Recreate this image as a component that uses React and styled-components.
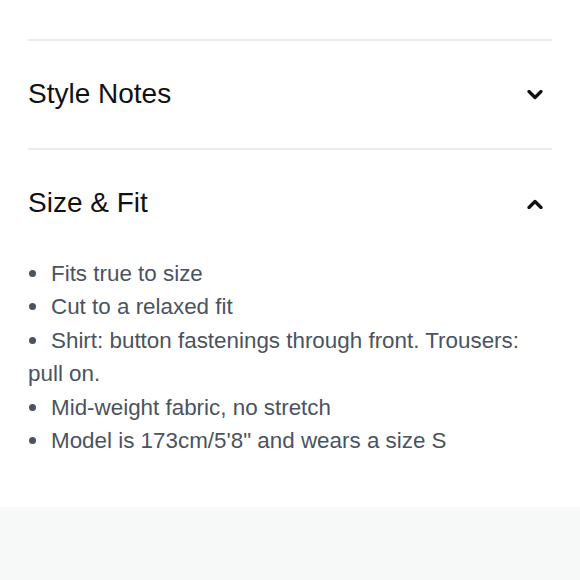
import React from "react";
import styled, { createGlobalStyle } from "styled-components";

// ========== GLOBAL ===========
const GlobalStyle = createGlobalStyle`
  html, body {
    margin: 0;
    padding: 0;
    background: #ffffff;
    font-family: "Liberation Sans", Arial, sans-serif;
  }
`;

// ========== STYLED COMPONENTS ===========
const Page = styled.div`
  width: 580px;
  min-height: 580px;
  display: flex;
  flex-direction: column;
`;

const Details = styled.section`
  padding: 39px 28px 50px;
  background: #ffffff;
`;

const Panel = styled.div`
  border-top: 2px solid #ebebeb;
`;

const PanelHeader = styled.button`
  width: 100%;
  height: 107px;
  display: flex;
  align-items: center;
  justify-content: space-between;
  padding: 0 9px 0 0;
  border: none;
  background: none;
  cursor: pointer;
  font-family: inherit;
  color: #111111;
`;

const PanelTitle = styled.span`
  font-size: 28px;
  font-weight: 400;
  letter-spacing: 0;
  margin-top: -2px;
`;

const List = styled.ul`
  margin: 0;
  padding: 0 20px 0 0;
  list-style: none;
  color: #4b5360;
  font-size: 22.4px;
  line-height: 33.4px;
`;

const Item = styled.li`
  &::before {
    content: "";
    display: inline-block;
    width: 7px;
    height: 7px;
    border-radius: 50%;
    background: #4b5360;
    margin: 0 15px 0 1px;
    vertical-align: 4px;
  }
`;

const Footer = styled.div`
  flex: 1;
  background: #f7f8f8;
`;

// ========== ICONS ===========
const Chevron = ({ up }) => (
  <svg width="16" height="10" viewBox="0 0 16 10" fill="none">
    <path
      d={up ? "M2 8.5 L8 2.5 L14 8.5" : "M2 1.5 L8 7.5 L14 1.5"}
      stroke="#111"
      strokeWidth="3.2"
      strokeLinecap="round"
      strokeLinejoin="round"
    />
  </svg>
);

// ========== DATA ===========
const fitNotes = [
  "Fits true to size",
  "Cut to a relaxed fit",
  "Shirt: button fastenings through front. Trousers: pull on.",
  "Mid-weight fabric, no stretch",
  "Model is 173cm/5'8\" and wears a size S",
];

// ========== COMPONENT ===========
const App = () => {
  return (
    <>
      <GlobalStyle />
      <Page>
        <Details>
          <Panel>
            <PanelHeader>
              <PanelTitle>Style Notes</PanelTitle>
              <Chevron />
            </PanelHeader>
          </Panel>
          <Panel>
            <PanelHeader>
              <PanelTitle>Size &amp; Fit</PanelTitle>
              <Chevron up />
            </PanelHeader>
            <List>
              {fitNotes.map((note, index) => (
                <Item key={index}>{note}</Item>
              ))}
            </List>
          </Panel>
        </Details>
        <Footer />
      </Page>
    </>
  );
};

export default App;
